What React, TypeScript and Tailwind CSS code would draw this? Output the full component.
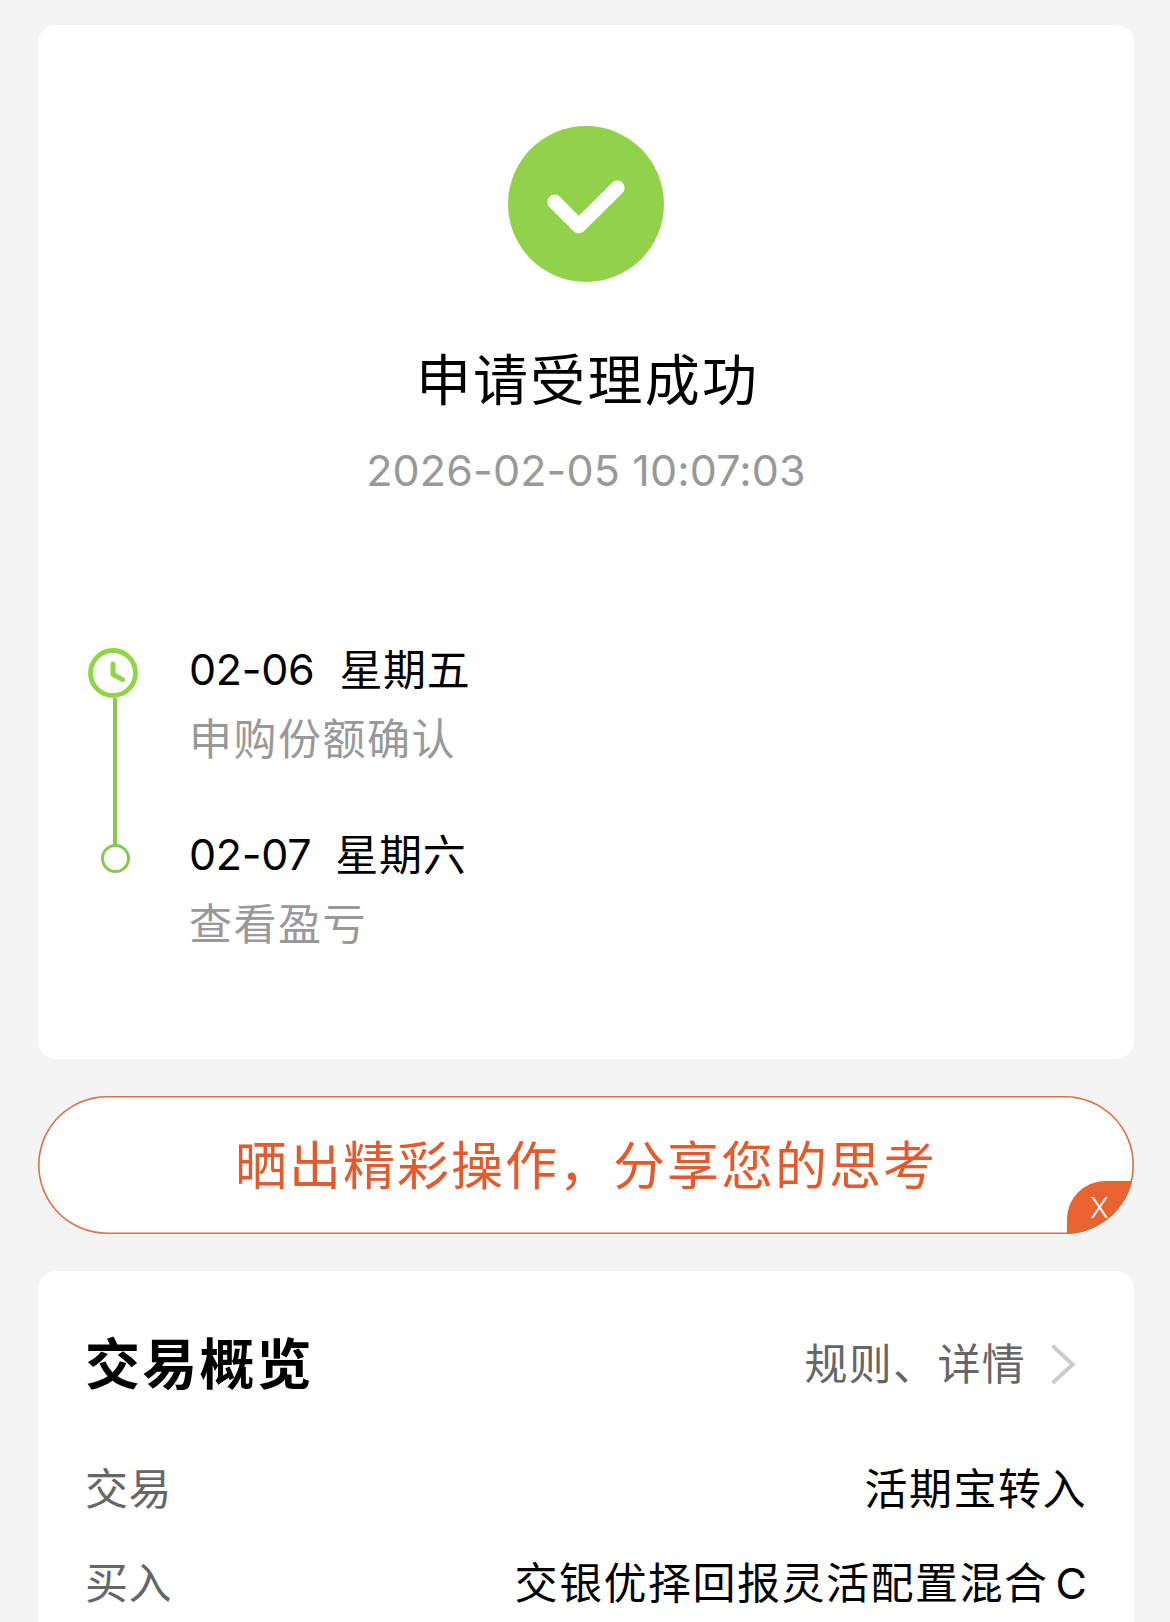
type Step = { date: string; day: string; note: string; dayGap: string };

const steps: Step[] = [
  { date: "02-06", day: "星期五", note: "申购份额确认", dayGap: "ml-[25px]" },
  { date: "02-07", day: "星期六", note: "查看盈亏", dayGap: "ml-[24px]" },
];

function SuccessIcon() {
  return (
    <svg width="156" height="156" viewBox="0 0 156 156" fill="none">
      <circle cx="78" cy="78" r="78" fill="#92d14a" />
      <path d="M46.6 75.9 70.7 100.1 109.3 61.9" stroke="#fff" strokeWidth="14.6" strokeLinecap="round" strokeLinejoin="round" />
    </svg>
  );
}

function ClockIcon() {
  return (
    <svg width="50" height="50" viewBox="0 0 50 50" fill="none" stroke="#8fd644" strokeLinecap="round" strokeLinejoin="round">
      <circle cx="25" cy="25" r="22.5" strokeWidth="4.8" />
      <path d="M25 16V26.5L34.6 31.6" strokeWidth="5" />
    </svg>
  );
}

function Row({ label, value, suffix }: { label: string; value: string; suffix?: string }) {
  return (
    <div className="flex h-[94px] items-center justify-between text-[43px] leading-[60px]">
      <span className="-ml-px tracking-[0.4px] text-[#666]">{label}</span>
      <span className="-mr-px tracking-[1.5px] text-black">
        {value}
        {suffix && <span className="ml-[7px] tracking-normal">{suffix}</span>}
      </span>
    </div>
  );
}

export default function App() {
  return (
    <div className="flex h-[1622px] flex-col overflow-hidden bg-[#f4f4f4] pr-9 pl-[38px] pt-[25px] font-['Inter','Noto_Sans_CJK_SC',sans-serif]">
      <section className="flex h-[1034px] shrink-0 flex-col rounded-[18px] bg-white pt-[101px]">
        <div className="flex flex-col items-center">
          <SuccessIcon />
          <h1 className="mt-[58px] pl-[3px] text-[55px] leading-[80px] tracking-[2.2px] text-black">申请受理成功</h1>
          <p className="mt-5 text-[43px] leading-[60px] tracking-[0.15px] text-[#999]">2026-02-05 10:07:03</p>
        </div>

        <div className="mt-[139px] flex pl-[50px]">
          <div className="flex w-[54px] flex-col items-center pt-[9px]">
            <div className="mr-1">
              <ClockIcon />
            </div>
            <div className="h-[147px] w-1 bg-[#86c850]" />
            <div className="-mt-px size-[29px] rounded-full border-[3px] border-[#86c850]" />
          </div>
          <div className="ml-[47px] flex flex-col gap-[56px] text-[43px] leading-[60px]">
            {steps.map((s) => (
              <div key={s.date}>
                <div className="flex text-black">
                  <span className="tracking-[-0.3px]">{s.date}</span>
                  <span className={`${s.dayGap} mt-px -mb-px tracking-[0.7px]`}>{s.day}</span>
                </div>
                <div className="mt-[10px] -mb-px tracking-[1.5px] text-[#999]">{s.note}</div>
              </div>
            ))}
          </div>
        </div>
      </section>

      <div className="relative mt-[37px] flex h-[138px] shrink-0 items-center justify-center overflow-hidden rounded-full bg-white shadow-[inset_0_0_0_1.6px_#dd6f47]">
        <span className="mt-[3px] text-[52px] leading-[76px] tracking-[2px] text-[#e5592b]">晒出精彩操作，分享您的思考</span>
        <button className="absolute right-0 bottom-0 flex h-[53px] w-[67px] items-center justify-center rounded-tl-[38px] bg-[#e86330] pr-[2px] text-[28px] leading-none font-light text-white">
          <span>X</span>
        </button>
      </div>

      <section className="mt-[37px] h-[420px] shrink-0 rounded-t-[18px] bg-white px-12">
        <div className="flex h-[185px] items-center justify-between">
          <h2 className="-ml-px text-[55px] leading-[80px] font-bold tracking-[2.2px] text-black">交易概览</h2>
          <div className="flex items-center pr-[9px]">
            <span className="text-[43px] leading-[60px] tracking-[1.3px] text-[#666]">规则、详情</span>
            <svg className="ml-6" width="27" height="42" viewBox="0 0 27 42" fill="none">
              <path d="M2.5 2.8 22.7 21.5 2.5 40" stroke="#ccc" strokeWidth="4" />
            </svg>
          </div>
        </div>
        <div className="-mt-[14px]">
          <Row label="交易" value="活期宝转入" />
          <Row label="买入" value="交银优择回报灵活配置混合" suffix="C" />
        </div>
      </section>
    </div>
  );
}
